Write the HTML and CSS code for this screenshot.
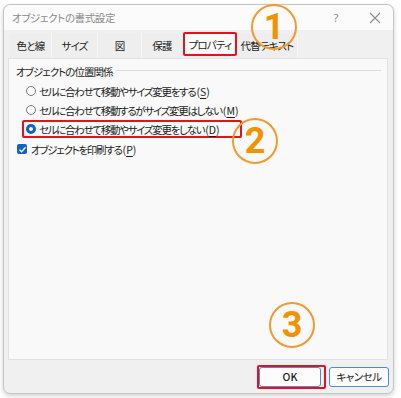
FILE: index.html
```html
<!DOCTYPE html>
<html lang="ja">
<head>
<meta charset="utf-8">
<link rel="stylesheet" href="styles.css">
</head>
<body>
<div class="window">
  <div class="titlebar">
    <span class="title">オブジェクトの書式設定</span>
    <span class="ctrl help">?</span>
    <span class="ctrl close">
      <svg width="12" height="12" viewBox="0 0 12 12"><path d="M1 1 L11 11 M11 1 L1 11" stroke="#8c8c8c" stroke-width="1.1" fill="none"/></svg>
    </span>
  </div>
  <div class="tabs">
    <div class="tab t1">色と線</div>
    <div class="tab t2">サイズ</div>
    <div class="tab t3">図</div>
    <div class="tab t4">保護</div>
    <div class="tab t5 active">プロパティ</div>
    <div class="tab t6">代替テキスト</div>
  </div>
  <div class="panel">
    <div class="group-head">
      <span class="group-label">オブジェクトの位置関係</span>
      <span class="group-line"></span>
    </div>
    <div class="options">
      <div class="opt"><span class="radio"></span><span class="txt">セルに合わせて移動やサイズ変更をする<span class="mn">(<u>S</u>)</span></span></div>
      <div class="opt"><span class="radio"></span><span class="txt">セルに合わせて移動するがサイズ変更はしない<span class="mn">(<u>M</u>)</span></span></div>
      <div class="opt marked"><span class="radio on"></span><span class="txt">セルに合わせて移動やサイズ変更をしない<span class="mn">(<u>D</u>)</span></span></div>
    </div>
    <div class="check-row">
      <span class="check"><svg width="9" height="9" viewBox="0 0 9 9"><path d="M1.5 4.8 L3.6 6.8 L7.6 2.2" stroke="#fff" stroke-width="1.3" fill="none"/></svg></span>
      <span class="txt">オブジェクトを印刷する<span class="mn">(<u>P</u>)</span></span>
    </div>
  </div>
  <div class="footer">
    <span class="okmark"><button class="btn ok">OK</button></span>
    <button class="btn cancel">キャンセル</button>
  </div>
</div>
<div class="num n1">1</div>
<div class="num n2">2</div>
<div class="num n3">3</div>
</body>
</html>
```
FILE: styles.css
```css
* { box-sizing: border-box; }
html, body { margin: 0; padding: 0; background: #fff; }
body {
  position: relative;
  width: 401px;
  height: 398px;
  padding: 4px 0 0 3px;
  font-family: "Noto Sans CJK JP", "Noto Sans", sans-serif;
  font-feature-settings: "palt" 1;
  color: #1b1b1b;
  font-size: 10.5px;
}
.window {
  width: 391px;
  height: 390px;
  border: 1px solid #c4c4c4;
  border-radius: 7px;
  background: #f0f0f0;
  box-shadow: 0 2px 5px rgba(0,0,0,0.18);
  display: flex;
  flex-direction: column;
}
.titlebar {
  height: 25px;
  background: #fbfbfb;
  border-radius: 7px 7px 0 0;
  display: flex;
  align-items: center;
  padding-left: 8px;
}
.title { color: #8a8a8a; font-size: 10.5px; letter-spacing: -0.4px; flex: 1; }
.ctrl { color: #8c8c8c; display: flex; align-items: center; justify-content: center; }
.help { width: 12px; margin-right: 27px; font-family: "Noto Sans", sans-serif; font-size: 11px; }
.close { width: 12px; margin-right: 12px; }
.tabs {
  height: 28px;
  display: flex;
  padding: 3px 0 0 6px;
}
.tab {
  height: 25px;
  display: flex;
  align-items: center;
  justify-content: center;
  font-size: 10.5px;
  letter-spacing: -0.8px;
  white-space: nowrap;
  color: #222;
  border-right: 1px solid #f6f6f6;
  background: #eeeeee;
}
.t1 { width: 42px; }
.t2 { width: 46px; }
.t3 { width: 44px; }
.t4 { width: 41px; }
.t5 { width: 54px; }
.t6 { width: 61px; }
.tab.active {
  background: #f9f9f9;
  border: 2px solid #e8101f;
  border-radius: 2px;
  height: 24px;
  margin-top: -1px;
}
.panel {
  flex: 1;
  margin: 0 5px 0 4px;
  background: #f9f9f9;
  border: 1px solid #e2e2e2;
  padding: 5px 6px 0 7px;
}
.group-head {
  display: flex;
  align-items: center;
  gap: 4px;
  height: 14px;
}
.group-label { font-size: 10.5px; letter-spacing: -1px; color: #1b1b1b; }
.group-line { flex: 1; height: 1px; background: #dcdcdc; margin-top: -2px; }
.options {
  display: flex;
  flex-direction: column;
  gap: 1px;
  margin-top: 4px;
  padding-left: 6px;
}
.opt {
  align-self: flex-start;
  display: flex;
  align-items: center;
  gap: 3px;
  height: 18px;
  padding-left: 2px;
  padding-right: 20px;
  border: 2px solid transparent;
  border-radius: 2px;
}
.opt.marked { border-color: #e8101f; }
.txt { font-size: 10.5px; letter-spacing: -1.3px; color: #1b1b1b; white-space: nowrap; }
.mn { letter-spacing: 0; margin-left: 1px; }
u { text-underline-offset: 2px; }
.radio {
  width: 10px;
  height: 10px;
  border: 1px solid #7a7a7a;
  border-radius: 50%;
  background: #fdfdfd;
  flex: none;
}
.radio.on {
  border: 3px solid #1062c4;
  background: #fff;
}
.check-row {
  display: flex;
  align-items: center;
  gap: 4px;
  margin-top: 3px;
  padding-left: 1px;
  height: 16px;
}
.check {
  width: 10px;
  height: 10px;
  background: #1062c4;
  border-radius: 2px;
  display: flex;
  align-items: center;
  justify-content: center;
  flex: none;
}
.footer {
  height: 33px;
  display: flex;
  align-items: center;
  justify-content: flex-end;
  padding-right: 4px;
  gap: 3px;
}
.okmark {
  display: flex;
  border: 2px solid #e8101f;
  border-radius: 2px;
  padding: 0 3px 0 0;
}
.btn {
  height: 20px;
  border: 1px solid #4f8bd3;
  border-radius: 3px;
  background: #fcfcfc;
  font-family: "Noto Sans CJK JP", "Noto Sans", sans-serif;
  font-feature-settings: "palt" 1;
  font-size: 10.5px;
  letter-spacing: -0.5px;
  color: #1b1b1b;
  padding: 0;
}
.ok { width: 62px; font-weight: 500; letter-spacing: 0; }
.cancel { width: 60px; }
.num {
  position: absolute;
  width: 46px;
  height: 46px;
  border: 2px solid #f29a2e;
  border-radius: 50%;
  color: #f39200;
  font-family: "Roboto", "Noto Sans", sans-serif;
  font-weight: 700;
  font-size: 36px;
  line-height: 42px;
  text-align: center;
}
.n1 { left: 251px; top: 4px; }
.n2 { left: 232px; top: 118px; }
.n3 { left: 269px; top: 302px; }
```
